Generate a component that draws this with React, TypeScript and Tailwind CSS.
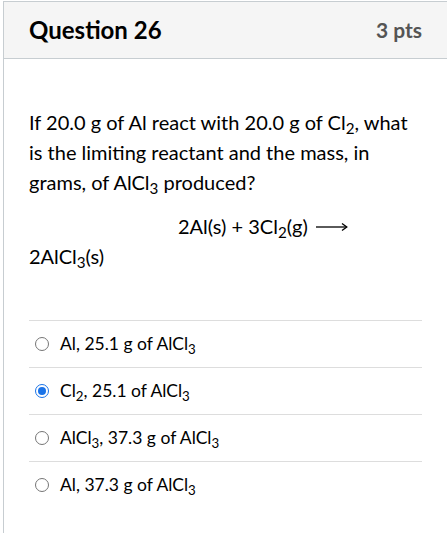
import React from "react";

const Radio = ({ checked }: { checked?: boolean }) =>
  checked ? (
    <span className="flex h-[14px] w-[14px] shrink-0 items-center justify-center rounded-full border-[1.5px] border-[#1a73e8] bg-white">
      <span className="h-[8px] w-[8px] rounded-full bg-[#1a73e8]" />
    </span>
  ) : (
    <span className="h-[14px] w-[14px] shrink-0 rounded-full border-[1.5px] border-[#767676] bg-white" />
  );

const Sub = ({ children }: { children: React.ReactNode }) => (
  <span className="inline-block align-[-0.28em] text-[0.76em] leading-none">{children}</span>
);

const answers: { label: React.ReactNode; checked?: boolean }[] = [
  { label: <>Al, 25.1 g of AlCl<Sub>3</Sub></> },
  { label: <>Cl<Sub>2</Sub>, 25.1 of AlCl<Sub>3</Sub></>, checked: true },
  { label: <>AlCl<Sub>3</Sub>, 37.3 g of AlCl<Sub>3</Sub></> },
  { label: <>Al, 37.3 g of AlCl<Sub>3</Sub></> },
];

export default function App() {
  return (
    <div className="h-[533px] w-[447px] overflow-hidden bg-white pl-[3px] pt-[1px] text-[#2d3b45]" style={{ fontFamily: "Lato, 'Open Sans', sans-serif" }}>
      <div className="h-full border-l border-t border-[#c7cdd1]">
        <div className="flex h-[57px] items-center justify-between border-b border-[#c7cdd1] bg-[#f5f5f5] px-[25px]">
          <span className="text-[24px] font-bold text-black">Question 26</span>
          <span className="text-[21px] font-bold text-[#555]">3 pts</span>
        </div>
        <div className="px-[25px] pt-[48px]">
          <p className="text-[20px] leading-[30px] text-black">
            If 20.0 g of Al react with 20.0 g of Cl<Sub>2</Sub>, what is the limiting reactant and the mass, in grams, of AlCl<Sub>3</Sub> produced?
          </p>
          <div className="mt-[14px] text-[20px] leading-[30px] text-black">
            <div className="flex items-center pl-[149px]">
              <span>
                2Al(s) + 3Cl<Sub>2</Sub>(g)
              </span>
              <svg className="ml-[8px] mt-[2px]" width="32" height="10" viewBox="0 0 32 10" fill="none" stroke="#000" strokeWidth="1.3">
                <path d="M0 5H30.5" />
                <path d="M26 1.5L30.8 5L26 8.5" />
              </svg>
            </div>
            <div>
              2AlCl<Sub>3</Sub>(s)
            </div>
          </div>
          <div className="mt-[49px]">
            {answers.map((a, i) => (
              <div key={i} className="flex h-[47px] items-center gap-[11px] border-t border-[#dddddd] pl-[6px] text-[17.5px] text-black">
                <Radio checked={a.checked} />
                <span>{a.label}</span>
              </div>
            ))}
          </div>
        </div>
      </div>
    </div>
  );
}
